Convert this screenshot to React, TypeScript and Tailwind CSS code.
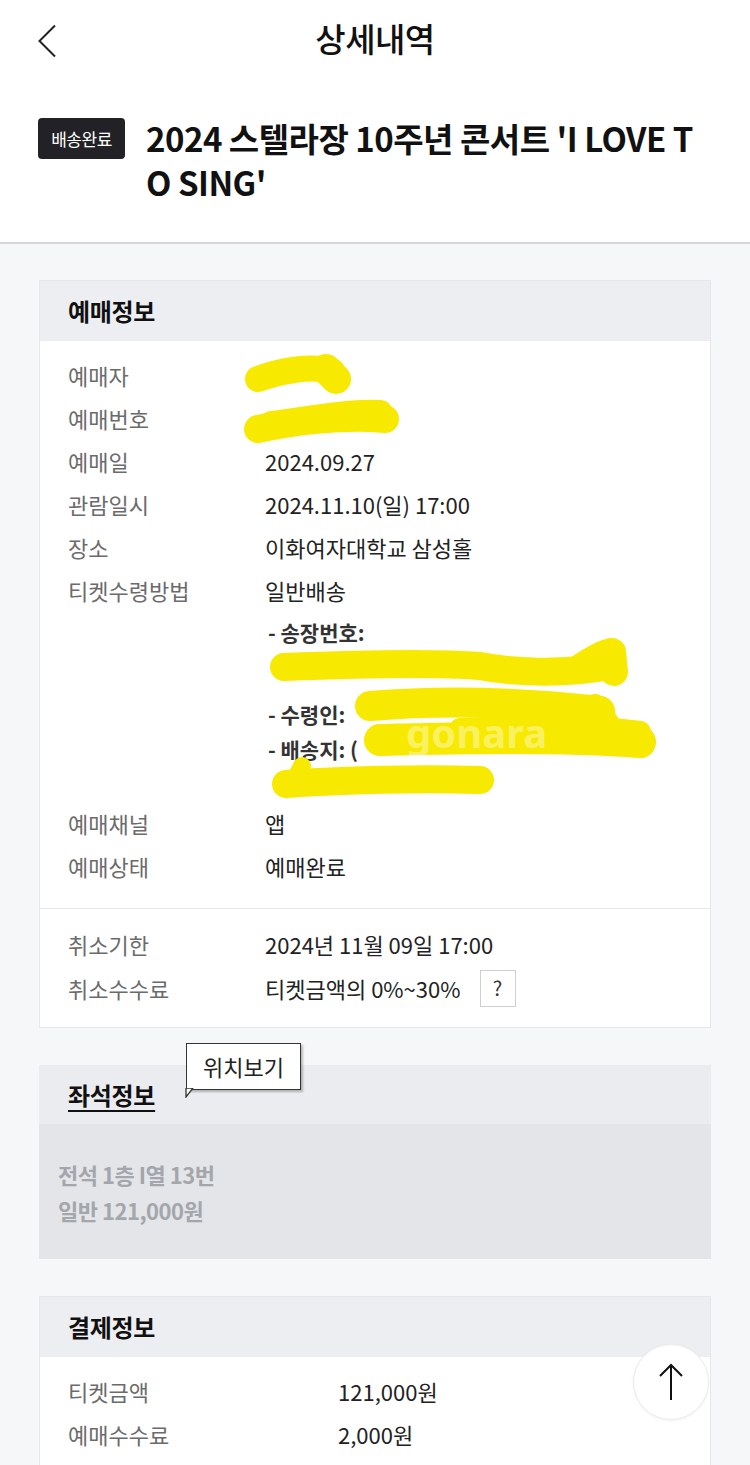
import React from "react";

const FONT = { fontFamily: '"Noto Sans CJK KR", "Noto Sans", sans-serif' };

function Row({ label, value, labelW = "w-[197px]" }: { label: string; value?: React.ReactNode; labelW?: string }) {
  return (
    <div className="flex items-center h-[43px] text-[22px]">
      <div className={`${labelW} shrink-0 text-[#6b6b6b]`}>{label}</div>
      <div className="text-[#222]">{value}</div>
    </div>
  );
}

export default function App() {
  return (
    <div className="relative w-[750px] min-h-[1465px] bg-[#f6f7f9]" style={FONT}>
      {/* top bar */}
      <div className="bg-white">
        <div className="relative flex items-center justify-center h-[82px]">
          <svg className="absolute left-[36px] top-[24px]" width="22" height="34" viewBox="0 0 22 34" fill="none">
            <path d="M19 1.5 L3.5 17 L19 32.5" stroke="#222" strokeWidth="2" />
          </svg>
          <div className="text-[33px] font-medium text-[#111] tracking-[-0.5px] mt-[-4px]">상세내역</div>
        </div>
        <div className="flex items-start pl-[38px] pr-[30px] pt-[34px] pb-[38px] border-b-2 border-[#d6d6d8]">
          <div className="shrink-0 mt-[2px] w-[87px] h-[41px] rounded-[4px] bg-[#222226] text-white text-[17px] flex items-center justify-center tracking-[-0.5px]">
            배송완료
          </div>
          <div className="ml-[21px] text-[33px] font-bold leading-[44px] text-[#111] tracking-[-0.5px]">
            2024 스텔라장 10주년 콘서트 'I LOVE T<br />O SING'
          </div>
        </div>
      </div>

      {/* 예매정보 */}
      <div className="mx-[39px] mt-[36px] bg-white border border-[#e6e7ea] relative">
        <div className="h-[60px] bg-[#edeef2] flex items-center pl-[28px] text-[24px] font-bold text-[#111] tracking-[-0.3px]">
          예매정보
        </div>
        <div className="px-[28px] pt-[13px] pb-[20px]">
          <Row label="예매자" value="" />
          <Row label="예매번호" value="" />
          <Row label="예매일" value="2024.09.27" />
          <Row label="관람일시" value="2024.11.10(일) 17:00" />
          <Row label="장소" value="이화여자대학교 삼성홀" />
          <Row label="티켓수령방법" value="일반배송" />
          <div className="pl-[200px] text-[21px] font-bold text-[#333] relative">
            <div className="h-[42px] flex items-center">- 송장번호:</div>
            <div className="h-[36px]"></div>
            <div className="h-[7px]"></div>
            <div className="h-[35px] flex items-center">- 수령인:</div>
            <div className="h-[35px] flex items-center">- 배송지: (</div>
            <div className="h-[35px]"></div>
          </div>
          <Row label="예매채널" value="앱" />
          <Row label="예매상태" value="예매완료" />
        </div>
        <div className="border-t border-[#e6e7ea] px-[28px] pt-[14px] pb-[17px]">
          <Row label="취소기한" value="2024년 11월 09일 17:00" />
          <div className="flex items-center h-[44px] text-[22px]">
            <div className="w-[197px] shrink-0 text-[#6b6b6b]">취소수수료</div>
            <div className="text-[#222]">티켓금액의 0%~30%</div>
            <div className="ml-[19px] w-[36px] h-[37px] border border-[#cfcfcf] flex items-center justify-center text-[20px] text-[#333]">?</div>
          </div>
        </div>

        {/* redaction marks */}
        <svg className="absolute left-0 top-0 pointer-events-none" width="671" height="560" viewBox="0 0 671 560" fill="none">
          <g stroke="#f7e900" strokeLinecap="round" strokeLinejoin="round">
            <path d="M218 98 C240 90, 270 84, 292 90" strokeWidth="26" />
            <path d="M286 88 L296 98" strokeWidth="30" />
            <path d="M218 148 C250 141, 300 134, 345 138" strokeWidth="28" />
            <path d="M232 143 C270 138, 310 130, 340 132" strokeWidth="26" />
            <path d="M244 386 C320 383, 400 382, 440 385 C470 391, 520 394, 570 385" strokeWidth="28" />
            <path d="M540 387 C555 377, 566 371, 572 371 L574 391" strokeWidth="28" />
            <path d="M330 425 C400 419, 480 421, 560 430" strokeWidth="30" />
            <path d="M555 424 L570 444" strokeWidth="22" />
            <path d="M340 459 C420 457, 520 455, 600 461" strokeWidth="32" />
            <path d="M420 448 C500 445, 560 445, 600 451" strokeWidth="22" />
            <path d="M246 503 C300 499, 380 497, 440 499" strokeWidth="28" />
            <path d="M258 493 L262 485" strokeWidth="18" />
          </g>
          <text x="366" y="467" fill="#ffffff" fillOpacity="0.4" fontSize="40" fontWeight="700" style={{ fontFamily: '"Noto Sans", sans-serif' }}>
            gonara
          </text>
        </svg>
      </div>

      {/* 좌석정보 */}
      <div className="mx-[39px] mt-[37px] relative">
        <div className="h-[59px] bg-[#ebecf0] flex items-center pl-[29px] text-[24px] font-bold text-[#111] tracking-[-0.3px]">
          <span className="underline underline-offset-[5px] decoration-[2px]">좌석정보</span>
        </div>
        <div className="bg-[#e4e5e8] pl-[19px] pt-[32px] pb-[31px] text-[22px] font-bold text-[#a3a6ab] leading-[36px] tracking-[-0.5px]">
          <div>전석 1층 I열 13번</div>
          <div>일반 121,000원</div>
        </div>
        <div className="absolute left-[147px] top-[-22px] w-[115px] h-[47px] bg-white border-[1.5px] border-[#333] shadow-[2px_2px_2px_rgba(0,0,0,0.25)] flex items-center justify-center text-[22px] text-[#222]">
          위치보기
          <svg className="absolute left-[-2px] bottom-[-9px]" width="10" height="10" viewBox="0 0 10 10">
            <path d="M1 0 L1 9 L8 0 Z" fill="#fff" stroke="#333" strokeWidth="1.3" />
          </svg>
        </div>
      </div>

      {/* 결제정보 */}
      <div className="mx-[39px] mt-[37px] bg-white border border-[#e6e7ea]">
        <div className="h-[60px] bg-[#edeef2] flex items-center pl-[28px] text-[24px] font-bold text-[#111] tracking-[-0.3px]">
          결제정보
        </div>
        <div className="px-[28px] pt-[13px] pb-[10px]">
          <Row label="티켓금액" value="121,000원" labelW="w-[270px]" />
          <Row label="예매수수료" value="2,000원" labelW="w-[270px]" />
        </div>
      </div>

      {/* scroll top button */}
      <div className="absolute left-[633px] top-[1344px] w-[76px] h-[76px] rounded-full bg-white border border-[#ececec] shadow-[0_1px_3px_rgba(0,0,0,0.06)] flex items-center justify-center">
        <svg width="26" height="38" viewBox="0 0 26 38" fill="none">
          <path d="M13 2 L13 37 M2 13 L13 2 L24 13" stroke="#111" strokeWidth="2" />
        </svg>
      </div>
    </div>
  );
}
